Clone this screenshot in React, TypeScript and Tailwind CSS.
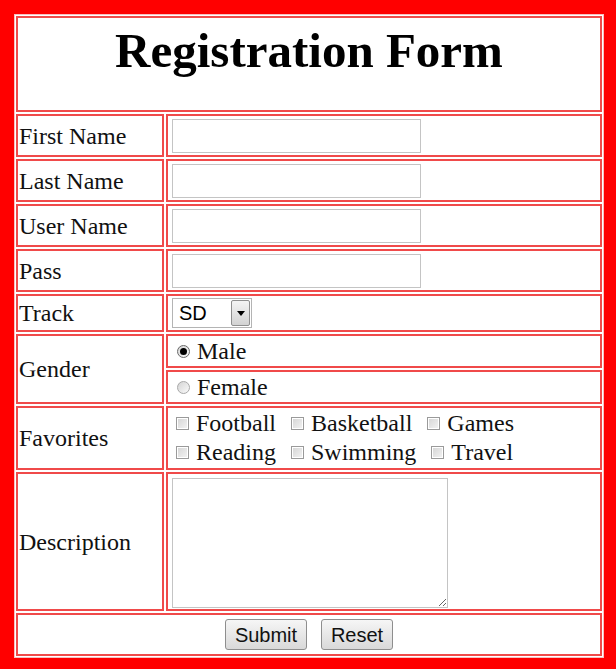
import React from "react";

const cell = "border-2 border-[#f04a4a] bg-white";
const serif = "font-['Liberation_Serif',serif] text-[24px] text-[#111]";

const Checkbox = () => (
  <span className="inline-block h-[13px] w-[13px] border border-[#9a9a9a] bg-gradient-to-br from-[#d4d4d4] to-[#f4f4f4] shadow-[inset_0_0_0_1px_#ffffff]" />
);

const Radio = ({ checked }: { checked?: boolean }) => (
  <span
    className={`inline-flex h-[13px] w-[13px] items-center justify-center rounded-full border ${
      checked ? "border-[#6a6a6a]" : "border-[#a8a8a8]"
    } bg-gradient-to-br from-[#d4d4d4] to-[#fafafa]`}
  >
    {checked && <span className="h-[7px] w-[7px] rounded-full bg-black" />}
  </span>
);

const TextRow = ({ label }: { label: string }) => (
  <div className="grid grid-cols-[148px_436px] gap-[2px]">
    <div className={`${cell} ${serif} flex h-[43px] items-center pl-[1px]`}>{label}</div>
    <div className={`${cell} flex h-[43px] items-center pl-[4px]`}>
      <input className="h-[34px] w-[249px] border border-[#c4c4c4] bg-white outline-none" />
    </div>
  </div>
);

const favorites = ["Football", "Basketball", "Games", "Reading", "Swimming", "Travel"];

export default function App() {
  return (
    <div className="min-h-[669px] w-[616px] bg-[#ff0000] pl-[14px] pt-[14px]">
      <div className="flex w-[590px] flex-col gap-[2px] border border-[#f8c0c0] bg-white p-[1px]">
        <div className={`${cell} h-[96px] pt-[5px] text-center`}>
          <h1 className="font-['Liberation_Serif',serif] text-[49px] font-bold leading-[56px] text-black">
            Registration Form
          </h1>
        </div>

        <TextRow label="First Name" />
        <TextRow label="Last Name" />
        <TextRow label="User Name" />
        <TextRow label="Pass" />

        <div className="grid grid-cols-[148px_436px] gap-[2px]">
          <div className={`${cell} ${serif} flex h-[38px] items-center pl-[1px]`}>Track</div>
          <div className={`${cell} flex h-[38px] items-center pl-[4px]`}>
            <div className="flex h-[30px] w-[80px] items-center border border-[#b4b4b4] bg-white pl-[6px] font-['Liberation_Sans',sans-serif] text-[20px] text-black">
              <span className="flex-1">SD</span>
              <span className="mr-[1px] flex h-[26px] w-[19px] items-center justify-center rounded-[2px] border border-[#8f8f8f] bg-gradient-to-b from-[#f4f4f4] to-[#d2d2d2]">
                <svg width="8" height="5" viewBox="0 0 8 5">
                  <path d="M0 0h8L4 5z" fill="#000" />
                </svg>
              </span>
            </div>
          </div>
        </div>

        <div className="grid grid-cols-[148px_436px] gap-[2px]">
          <div className={`${cell} ${serif} flex items-center pl-[1px]`}>Gender</div>
          <div className="flex flex-col gap-[2px]">
            <label className={`${cell} ${serif} flex h-[34px] items-center gap-[7px] pl-[9px]`}>
              <Radio checked />
              Male
            </label>
            <label className={`${cell} ${serif} flex h-[34px] items-center gap-[7px] pl-[9px]`}>
              <Radio />
              Female
            </label>
          </div>
        </div>

        <div className="grid grid-cols-[148px_436px] gap-[2px]">
          <div className={`${cell} ${serif} flex h-[64px] items-center pl-[1px]`}>Favorites</div>
          <div className={`${cell} ${serif} flex h-[64px] flex-wrap content-center gap-x-[15px] pl-[8px] leading-[29px]`}>
            {favorites.map((f) => (
              <label key={f} className="flex items-center gap-[7px]">
                <Checkbox />
                {f}
              </label>
            ))}
          </div>
        </div>

        <div className="grid grid-cols-[148px_436px] gap-[2px]">
          <div className={`${cell} ${serif} flex h-[139px] items-center pl-[1px]`}>Description</div>
          <div className={`${cell} h-[139px] pl-[4px] pt-[4px]`}>
            <textarea className="h-[130px] w-[276px] resize border border-[#c4c4c4] bg-white outline-none" />
          </div>
        </div>

        <div className={`${cell} flex h-[43px] items-center justify-center gap-[14px]`}>
          <button className="h-[31px] w-[82px] rounded-[3px] border border-[#8e8e8e] bg-gradient-to-b from-[#f6f6f6] to-[#d9d9d9] font-['Liberation_Sans',sans-serif] text-[20px] text-[#111]">
            Submit
          </button>
          <button className="h-[31px] w-[72px] rounded-[3px] border border-[#8e8e8e] bg-gradient-to-b from-[#f6f6f6] to-[#d9d9d9] font-['Liberation_Sans',sans-serif] text-[20px] text-[#111]">
            Reset
          </button>
        </div>
      </div>
    </div>
  );
}
